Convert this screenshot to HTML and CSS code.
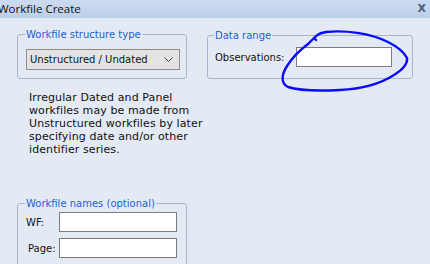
FILE: index.html
```html
<!DOCTYPE html>
<html>
<head>
<meta charset="utf-8">
<link rel="stylesheet" href="styles.css">
</head>
<body>
<div class="window">
  <div class="titlebar">
    <span class="title">Workfile Create</span>
    <span class="close">X</span>
  </div>
  <div class="main">
    <div class="col-left">
      <fieldset class="group group-type">
        <legend>Workfile structure type</legend>
        <div class="select">
          <span>Unstructured / Undated</span>
          <svg class="chev" width="9" height="6" viewBox="0 0 9 6"><path d="M0.5 0.5 L4.5 4.5 L8.5 0.5" fill="none" stroke="#444" stroke-width="1"/></svg>
        </div>
      </fieldset>
      <p class="note">Irregular Dated and Panel<br>workfiles may be made from<br>Unstructured workfiles by later<br>specifying date and/or other<br>identifier series.</p>
      <fieldset class="group group-names">
        <legend>Workfile names (optional)</legend>
        <div class="row"><span class="lbl">WF:</span><div class="input"></div></div>
        <div class="row"><span class="lbl lbl-page">Page:</span><div class="input"></div></div>
      </fieldset>
    </div>
    <div class="col-right">
      <fieldset class="group group-range">
        <legend>Data range</legend>
        <div class="row"><span class="lbl">Observations:</span><div class="input input-obs"></div></div>
      </fieldset>
    </div>
  </div>
  <svg class="scribble" width="430" height="264" viewBox="0 0 430 264">
    <path d="M316 40 C312 38 318 33 326 32 C345 30 370 33 388 42 C398 47 404 52 407 58 C408 64 402 70 394 75 C380 84 362 89 340 90 C320 91 300 91 288 87 C280 83 282 74 287 66 C292 58 300 50 308 44 C311 41 313 39 316 36" fill="none" stroke="#0a0aff" stroke-width="2.4" stroke-linecap="round"/>
  </svg>
</div>
</body>
</html>
```

FILE: styles.css
```css
html, body {
  margin: 0;
  padding: 0;
}
body {
  width: 430px;
  height: 264px;
  overflow: hidden;
  background: #e4eaf4;
  font-family: "DejaVu Sans", "Liberation Sans", sans-serif;
  font-size: 10px;
  color: #111;
}
.window {
  position: relative;
  width: 430px;
  height: 264px;
  overflow: hidden;
}
.titlebar {
  height: 18px;
  background: linear-gradient(#ccdbef, #bccfe8);
  display: flex;
  align-items: center;
  justify-content: space-between;
}
.title {
  font-family: "Open Sans", sans-serif;
  font-size: 11.5px;
  color: #111;
  margin-left: -2px;
  line-height: 16px;
}
.close {
  font-family: "DejaVu Sans", sans-serif;
  font-weight: bold;
  font-size: 11px;
  color: #4a5c7c;
  margin-right: 4px;
  line-height: 12px;
}
.main {
  display: grid;
  grid-template-columns: 170px 206px;
  column-gap: 20px;
  padding-left: 17px;
  padding-top: 10px;
}
.group {
  margin: 0;
  border: 1px solid #a9b7cc;
  border-radius: 3px;
  min-width: 0;
}
.group legend {
  color: #1f5fcf;
  padding: 0 1px;
  margin-left: -1px;
  line-height: 13px;
}
.group-type {
  padding: 8px 6px 8px 8px;
}
.select {
  height: 19px;
  border: 1px solid #8c8c8c;
  background: #e3e3e3;
  display: flex;
  align-items: center;
  justify-content: space-between;
  padding: 0 6px 0 3px;
}
.chev {
  display: block;
}
.note {
  margin: 12px 0 0 12px;
  font-size: 11px;
  letter-spacing: 0.1px;
  line-height: 13px;
  white-space: nowrap;
}
.group-names {
  margin-top: 41px;
  padding: 2px 9px 8px 8px;
}
.row {
  display: flex;
  align-items: center;
  justify-content: space-between;
}
.row + .row {
  margin-top: 6px;
}
.lbl-page {
  margin-left: 2px;
}
.input {
  width: 116px;
  height: 18px;
  border: 1px solid #7c7c7c;
  background: #fff;
}
.col-right {
  padding-top: 1px;
}
.group-range {
  padding: 5px 20px 11px 7px;
}
.input-obs {
  width: 94px;
}
.scribble {
  position: absolute;
  left: 0;
  top: 0;
  pointer-events: none;
}
```
